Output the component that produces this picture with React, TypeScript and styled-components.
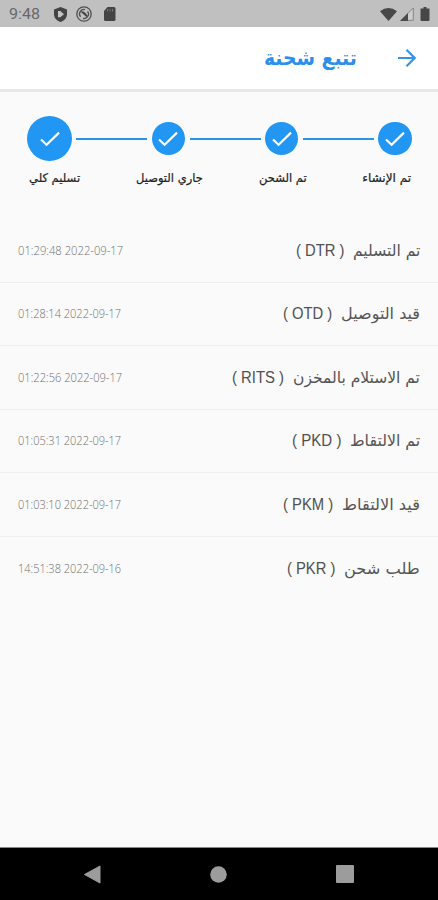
import React, { useLayoutEffect, useRef } from "react";
import styled, { createGlobalStyle } from "styled-components";

const Global = createGlobalStyle`
  * { box-sizing: border-box; }
  html, body { margin: 0; padding: 0; background: #fafafa; }
  body { font-family: "DejaVu Sans", "Noto Sans", sans-serif; }
`;

const Screen = styled.div`
  display: flex;
  flex-direction: column;
  width: 438px;
  height: 900px;
  overflow: hidden;
  background: #fafafa;
`;

const StatusBar = styled.div`
  display: flex;
  align-items: center;
  justify-content: space-between;
  flex: none;
  height: 27px;
  padding: 1px 5px 0 9px;
  background: #c0c0c0;
`;

const StatusGroup = styled.div<{ $gap: number }>`
  display: flex;
  align-items: center;
  gap: ${(p) => p.$gap}px;
`;

const Clock = styled.span`
  width: 36px;
  font: 400 15px/20px Roboto, sans-serif;
  color: #686868;
`;

const Header = styled.header`
  display: flex;
  align-items: center;
  flex: none;
  direction: rtl;
  gap: 40px;
  height: 65px;
  padding: 0 21px 0 0;
  background: #fff;
  border-bottom: 3px solid #e8e8e8;
`;

const Title = styled.h1`
  margin: 0;
  font-size: 21px;
  font-weight: 700;
  line-height: 28px;
  color: #2c8fea;
`;

const Steps = styled.section`
  display: flex;
  flex: none;
  direction: rtl;
  flex-direction: column;
  height: 127px;
  padding-top: 24px;
`;

const Track = styled.div`
  display: flex;
  align-items: center;
  height: 45px;
  padding-right: 26.4px;
`;

const Dot = styled.div<{ $large?: boolean }>`
  display: flex;
  align-items: center;
  justify-content: center;
  flex: none;
  width: ${(p) => (p.$large ? 45 : 33.6)}px;
  height: ${(p) => (p.$large ? 45 : 33.6)}px;
  border-radius: 50%;
  background: #2196f3;
`;

const Line = styled.div`
  flex: none;
  width: 71px;
  height: 2px;
  margin: 0 4.3px;
  background: #2b93e8;
`;

const Labels = styled.div`
  display: flex;
  align-items: center;
  justify-content: space-between;
  margin-top: 6px;
  height: 22px;
  padding: 0 27px 0 29px;
`;

const StepLabel = styled.span`
  font-size: 12px;
  line-height: 20px;
  color: #222;
  -webkit-text-stroke: 0.2px #222;
`;

const List = styled.ul`
  flex: 1;
  margin: 0;
  padding: 0;
  list-style: none;
`;

const Row = styled.li`
  display: flex;
  direction: rtl;
  align-items: center;
  height: 63.5px;
  padding: 1px 18px 0;
  border-bottom: 1px solid #eeeeee;
  &:last-child { border-bottom: 0; }
`;

const Status = styled.span`
  font-size: 16px;
  line-height: 24px;
  color: #555;
`;

const Code = styled.span`
  margin-right: 9px;
  font: 400 16px/24px "Liberation Sans", sans-serif;
  color: #505050;
`;

const Stamp = styled.time`
  margin-right: auto;
  font: 300 12.5px/20px "Open Sans", "Noto Sans", sans-serif;
  color: #707070;
`;

const NavBar = styled.nav`
  display: flex;
  align-items: center;
  justify-content: space-between;
  flex: none;
  height: 53px;
  padding: 0 84px 0 83px;
  background: #000;
  border-top: 1px solid #888;
`;

const FitBox = styled.span<{ $width: number }>`
  display: block;
  width: ${(p) => p.$width}px;
  white-space: nowrap;
`;

const FitInner = styled.span<{ $rtl: boolean }>`
  display: inline-block;
  direction: ${(p) => (p.$rtl ? "rtl" : "ltr")};
  transform-origin: ${(p) => (p.$rtl ? "right" : "left")} center;
`;

/* Condenses or widens a single line of text to a fixed measure. */
function Fit({ width, rtl = false, children }: { width: number; rtl?: boolean; children: string }) {
  const ref = useRef<HTMLSpanElement>(null);
  useLayoutEffect(() => {
    const el = ref.current;
    if (el) el.style.transform = `scaleX(${width / el.offsetWidth})`;
  }, [width, children]);
  return (
    <FitBox $width={width} dir={rtl ? "rtl" : "ltr"}>
      <FitInner ref={ref} $rtl={rtl}>{children}</FitInner>
    </FitBox>
  );
}

const Check = () => (
  <svg width="20" height="20" viewBox="0 0 20 20" fill="none" stroke="#fff" strokeWidth="2.2">
    <path d="M1 10.500 6.600 15.800 19 3.600" />
  </svg>
);

const steps = [
  { label: "تم الإنشاء", width: 49 },
  { label: "تم الشحن", width: 48 },
  { label: "جاري التوصيل", width: 67 },
  { label: "تسليم كلي", width: 51 },
];

const events = [
  { status: "تم التسليم", w: 67, code: "( DTR )", cw: 48, time: "01:29:48 2022-09-17", tw: 105 },
  { status: "قيد التوصيل", w: 79, code: "( OTD )", cw: 49, time: "01:28:14 2022-09-17", tw: 103 },
  { status: "تم الاستلام بالمخزن", w: 127, code: "( RITS )", cw: 52, time: "01:22:56 2022-09-17", tw: 104 },
  { status: "تم الالتقاط", w: 70, code: "( PKD )", cw: 49, time: "01:05:31 2022-09-17", tw: 103 },
  { status: "قيد الالتقاط", w: 78, code: "( PKM )", cw: 50, time: "01:03:10 2022-09-17", tw: 103 },
  { status: "طلب شحن", w: 76, code: "( PKR )", cw: 48, time: "14:51:38 2022-09-16", tw: 103 },
];

export default function App() {
  return (
    <Screen>
      <Global />
      <StatusBar>
        <StatusGroup $gap={9}>
          <Clock><Fit width={31}>9:48</Fit></Clock>
          <svg width="13" height="15" viewBox="0 0 13 15">
            <path d="M6.5 0 13 2.4v4.7c0 3.8-2.7 6.8-6.5 7.9C2.7 13.9 0 10.9 0 7.1V2.4Z" fill="#444" />
            <path d="M4 4h2.300l3.700 3.300-3.700 3H4Z" fill="#c4c4c4" />
          </svg>
          <svg width="16" height="16" viewBox="0 0 16 16" fill="none" stroke="#505050">
            <circle cx="8" cy="8" r="7.200" strokeWidth="1.300" />
            <path d="M4.500 10.800A4.500 4.500 0 0 1 9 3.600M11.600 5.300A4.500 4.500 0 0 1 7 12.400" strokeWidth="1.300" />
            <path d="M4.500 5.500Q8 4.300 11.500 9.500L10.500 11 6 7Z" fill="#444" stroke="none" />
          </svg>
          <svg width="16" height="14" viewBox="0 0 16 14">
            <path d="M6.500 0H13q1.500 0 1.500 1.500v11Q14.500 14 13 14H4.500Q3 14 3 12.500V4Z" fill="#444" />
            <path d="M6.500 2v2.500M9 2v2.500M11.500 2v2.500" stroke="#777" />
          </svg>
        </StatusGroup>
        <StatusGroup $gap={3}>
          <svg width="17" height="13" viewBox="0 0 17 13">
            <path d="M0 3.200Q8.500-3 17 3.200L8.500 13Z" fill="#484848" />
          </svg>
          <svg width="14" height="14" viewBox="0 0 14 14">
            <path d="M13.300 1v12.300H1Z" fill="#cecece" stroke="#858585" />
            <path d="M8 6v8H0Z" fill="#4c4c4c" />
          </svg>
          <svg width="16" height="14" viewBox="0 0 16 14">
            <path d="M6.500 0h3v1.500h3V13q0 1-1 1h-7q-1 0-1-1V1.500h3Z" fill="#464646" />
          </svg>
        </StatusGroup>
      </StatusBar>

      <Header>
        <svg width="20" height="20" viewBox="0 0 20 20" fill="none" stroke="#3493ea" strokeWidth="2.2">
          <path d="M1 10h17M9.500 1.800l8.200 8.200-8.200 8.200" />
        </svg>
        <Title><Fit width={93} rtl>تتبع شحنة</Fit></Title>
      </Header>

      <Steps>
        <Track>
          {steps.map((s, i) => (
            <React.Fragment key={s.label}>
              {i > 0 && <Line />}
              <Dot $large={i === steps.length - 1}><Check /></Dot>
            </React.Fragment>
          ))}
        </Track>
        <Labels>
          {steps.map((s) => (
            <StepLabel key={s.label}><Fit width={s.width} rtl>{s.label}</Fit></StepLabel>
          ))}
        </Labels>
      </Steps>

      <List>
        {events.map((e) => (
          <Row key={e.time}>
            <Status><Fit width={e.w} rtl>{e.status}</Fit></Status>
            <Code><Fit width={e.cw}>{e.code}</Fit></Code>
            <Stamp><Fit width={e.tw}>{e.time}</Fit></Stamp>
          </Row>
        ))}
      </List>

      <NavBar>
        <svg width="18" height="19" viewBox="0 0 18 19">
          <path d="M17 1v17L1.500 9.500Z" fill="#9c9c9c" stroke="#9c9c9c" strokeLinejoin="round" />
        </svg>
        <svg width="17" height="17" viewBox="0 0 17 17">
          <circle cx="8.500" cy="8.500" r="8.300" fill="#9c9c9c" />
        </svg>
        <svg width="18" height="18" viewBox="0 0 18 18">
          <rect width="18" height="18" rx="1" fill="#9c9c9c" />
        </svg>
      </NavBar>
    </Screen>
  );
}
